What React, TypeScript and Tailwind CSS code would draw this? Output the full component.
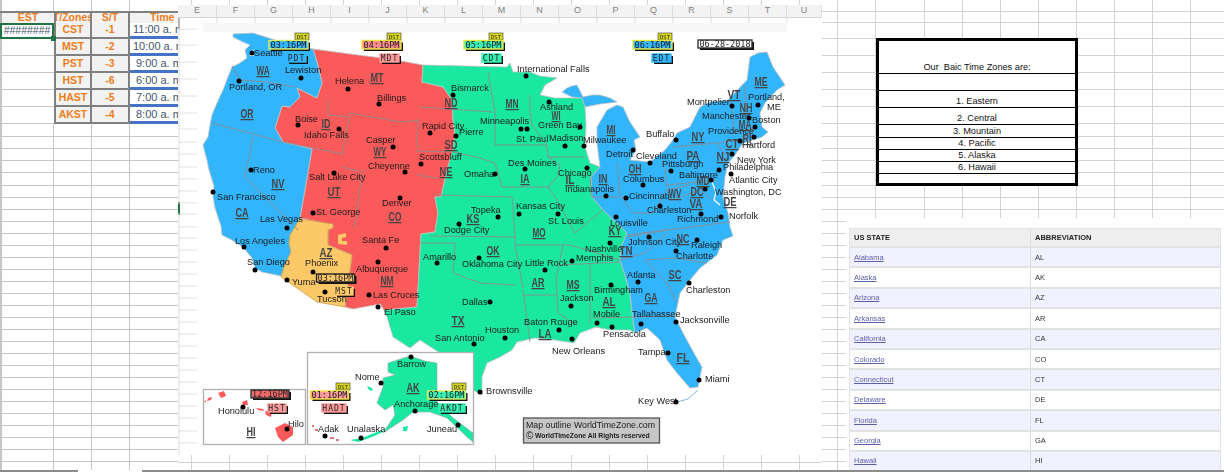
const BLUE = "#33b5fb";
const RED = "#fb5a5a";
const GREEN = "#1be8a0";
const ORANGE = "#fdc868";

const upperRows = [11, 12, 16, 17, 17, 17, 17, 17];
const zones = [
  ["CST", "-1", "11:00 a. m."],
  ["MST", "-2", "10:00 a. m."],
  ["PST", "-3", "9:00 a. m."],
  ["HST", "-6", "6:00 a. m."],
  ["HAST", "-5", "7:00 a. m."],
  ["AKST", "-4", "8:00 a. m."],
];
const plainRows = [13, 12, 12, 12, 13, 12, 12, 12, ...Array(20).fill(12), 8];
const topRightRows = [12, 11, 16, 17, 17, 17, 17, 17, 13, 12, 12, 12, 13, 12, 12, 8];
const topRightCols = [16, 38, 49, 38, 38, 38, 38, 38, 38, 38, 33];
const columnLetters = "EFGHIJKLMNOPQRSTU".split("");
const tickCols = [14, ...Array(16).fill(38), 22];

const zoneList = [
  { text: "Our  Baic Time Zones are:", h: "h-[33px]" },
  { text: "", h: "h-[17px]" },
  { text: "1. Eastern", h: "h-[17px]" },
  { text: "2. Central", h: "h-[17px]" },
  { text: "3. Mountain", h: "h-[13px]" },
  { text: "4. Pacific", h: "h-[12px]" },
  { text: "5. Alaska", h: "h-[12px]" },
  { text: "6. Hawaii", h: "h-[12px]" },
];

const states = [
  ["Alabama", "AL"], ["Alaska", "AK"], ["Arizona", "AZ"], ["Arkansas", "AR"],
  ["California", "CA"], ["Colorado", "CO"], ["Connecticut", "CT"], ["Delaware", "DE"],
  ["Florida", "FL"], ["Georgia", "GA"], ["Hawaii", "HI"],
];

const stateLines = [
  "232,66 240,80 267,82 295,87", "212,123 283,142", "253,137 245,177 298,230",
  "328,100 328,115 348,117", "350,113 342,155", "283,142 343,154", "342,167 362,172",
  "362,173 355,228", "350,113 400,122 420,120", "420,107 493,112", "418,120 417,151",
  "417,151 453,152 480,158 495,163", "417,175 437,178", "435,195 512,197", "430,236 515,237",
  "420,243 455,243", "488,72 495,112 495,145", "495,145 547,145", "530,95 530,113 532,125 547,145",
  "502,187 548,187", "548,187 557,200 575,233", "512,197 515,237 515,245", "548,157 585,157",
  "495,163 502,187", "547,145 548,157 560,165 558,176 548,187", "590,177 592,197",
  "515,245 570,245 620,260", "523,295 557,295", "455,243 453,273 480,283 515,285",
  "515,245 523,288", "523,290 530,342", "557,295 558,313 577,325", "590,263 590,323",
  "560,265 620,262", "563,245 556,280 557,295", "593,318 633,317 677,316",
  "645,260 667,283 677,303", "645,260 677,258 707,263", "627,237 667,230",
  "620,260 645,253 667,233", "627,235 730,222", "617,163 620,195", "592,197 620,197",
  "620,195 633,213 653,213 667,190 690,185", "663,160 667,185 717,180",
  "673,147 717,143 725,155", "717,143 740,140 755,130", "730,100 735,135", "745,85 745,118",
  "735,132 755,128", "667,185 672,200 700,190 712,200", "575,233 590,220 603,210",
];

const cities: [string, number, number, number, number][] = [
  ["Seattle", 254, 56, 252, 53], ["Lewiston", 285, 73, 301, 78], ["Helena", 335, 84, 348, 89],
  ["Billings", 377, 101, 379, 104], ["Portland, OR", 229, 90, 239, 81], ["Boise", 295, 122, 298, 125],
  ["Idaho Falls", 304, 138, 339, 129], ["Casper", 366, 143, 393, 147], ["Cheyenne", 368, 169, 405, 172],
  ["Reno", 253, 173, 251, 170], ["San Francisco", 217, 200, 213, 192], ["Salt Lake City", 309, 180, 334, 173],
  ["St. George", 316, 215, 313, 213], ["Las Vegas", 260, 222, 287, 228], ["Denver", 382, 206, 400, 198],
  ["Los Angeles", 235, 244, 244, 247], ["San Diego", 247, 265, 255, 270], ["Phoenix", 305, 266, 313, 272],
  ["Yuma", 292, 285, 287, 280], ["Tucson", 317, 302, 325, 292], ["Santa Fe", 362, 243, 386, 248],
  ["Albuquerque", 356, 272, 378, 262], ["Las Cruces", 373, 298, 369, 295], ["El Paso", 384, 315, 378, 307],
  ["Amarillo", 423, 260, 437, 263], ["Oklahoma City", 462, 267, 479, 258], ["Dallas", 462, 305, 490, 302],
  ["San Antonio", 435, 341, 474, 344], ["Houston", 485, 333, 505, 338], ["Brownsville", 486, 394, 480, 392],
  ["Little Rock", 525, 266, 545, 270], ["Memphis", 576, 261, 572, 261], ["Nashville", 585, 252, 610, 243],
  ["Johnson City", 628, 245, 649, 237], ["Raleigh", 691, 248, 697, 240], ["Charlotte", 676, 259, 676, 251],
  ["Atlanta", 627, 278, 638, 282], ["Charleston", 686, 293, 689, 283], ["Birmingham", 594, 293, 611, 285],
  ["Jackson", 560, 301, 571, 306], ["Baton Rouge", 524, 325, 559, 330], ["Mobile", 593, 317, 597, 323],
  ["Pensacola", 603, 337, 612, 327], ["Tallahassee", 632, 317, 641, 324], ["Jacksonville", 680, 323, 676, 322],
  ["New Orleans", 552, 354, 572, 339], ["Tampa", 638, 355, 668, 353], ["Miami", 705, 382, 699, 380],
  ["Key West", 638, 404, 676, 402], ["International Falls", 517, 72, 526, 76], ["Bismarck", 451, 91, 453, 95],
  ["Ashland", 540, 110, 549, 102], ["Minneapolis", 480, 124, 521, 129], ["St. Paul", 516, 142, 527, 129],
  ["Green Bay", 538, 128, 580, 127], ["Madison", 549, 141, 565, 146], ["Milwaukee", 583, 143, 584, 146],
  ["Rapid City", 422, 129, 430, 133], ["Pierre", 459, 135, 456, 136], ["Scottsbluff", 419, 160, 421, 164],
  ["Omaha", 464, 177, 495, 174], ["Des Moines", 508, 166, 525, 169], ["Chicago", 558, 176, 587, 168],
  ["Indianapolis", 565, 192, 606, 196], ["Detroit", 606, 157, 633, 150], ["Cleveland", 636, 159, 650, 163],
  ["Buffalo", 646, 137, 676, 140], ["Pittsburgh", 662, 167, 671, 171], ["Columbus", 623, 182, 643, 185],
  ["Cincinnati", 629, 199, 626, 198], ["Charleston", 647, 213, 660, 206], ["Richmond", 677, 222, 701, 214],
  ["Norfolk", 729, 219, 721, 217], ["Louisville", 610, 226, 616, 217], ["Montpelier", 687, 105, 732, 106],
  ["Portland,", 748, 100, 758, 105], ["Manchester", 702, 119, 749, 118], ["Boston", 752, 123, 755, 127],
  ["Providence", 708, 134, 740, 141], ["Hartford", 742, 148, 754, 137], ["New York", 737, 163, 732, 154],
  ["Philadelphia", 723, 170, 719, 170], ["Baltimore", 679, 178, 711, 180], ["Atlantic City", 729, 183, 731, 174],
  ["Washington, DC", 715, 195, 705, 189], ["Topeka", 471, 213, 498, 217], ["Kansas City", 516, 209, 519, 214],
  ["St. Louis", 548, 224, 558, 214], ["Dodge City", 444, 233, 459, 224], ["Barrow", 397, 367, 411, 357],
  ["Nome", 355, 380, 381, 383], ["Anchorage", 394, 407, 415, 411], ["Adak", 318, 432, 325, 436],
  ["Unalaska", 347, 432, 361, 438], ["Juneau", 427, 432, 458, 425], ["Honolulu", 218, 414, 243, 407],
  ["Hilo", 288, 427, 287, 429],
];

const stateLabels: [string, number, number][] = [
  ["WA", 263, 75], ["OR", 247, 118], ["ID", 326, 128], ["MT", 377, 82], ["WY", 380, 156], ["NV", 278, 188],
  ["UT", 334, 196], ["CA", 242, 217], ["CO", 395, 221], ["AZ", 326, 257], ["NM", 387, 285], ["OK", 493, 255],
  ["TX", 458, 325], ["KS", 473, 223], ["NE", 446, 176], ["SD", 451, 149], ["ND", 451, 107], ["MN", 512, 108],
  ["WI", 556, 120], ["IA", 525, 183], ["IL", 570, 184], ["IN", 603, 183], ["MI", 611, 134], ["OH", 635, 173],
  ["KY", 615, 235], ["MO", 539, 237], ["WV", 675, 198], ["VA", 696, 208], ["PA", 693, 160], ["NY", 698, 141],
  ["VT", 734, 99], ["ME", 761, 86], ["NH", 746, 112], ["MA", 745, 129], ["RI", 747, 143], ["CT", 732, 148],
  ["NJ", 723, 161], ["DE", 730, 206], ["MD", 703, 185], ["DC", 697, 196], ["NC", 683, 243], ["TN", 626, 255],
  ["SC", 675, 279], ["AR", 538, 287], ["MS", 573, 289], ["AL", 609, 306], ["GA", 651, 302], ["LA", 545, 338],
  ["FL", 683, 362], ["AK", 413, 392], ["HI", 251, 436],
];

function Chip({ x, y, w, h, text, fill, stroke = "#333", size = 8.5, spacing = 0, sw = 1.4 }: {
  x: number; y: number; w: number; h: number; text: string; fill: string; stroke?: string; size?: number; spacing?: number; sw?: number;
}) {
  return (
    <g>
      <rect x={x + 2} y={y + 2} width={w} height={h} fill="#111" />
      <rect x={x} y={y} width={w} height={h} fill={fill} stroke={stroke} strokeWidth={sw} />
      <text x={x + w / 2} y={y + h / 2 + size * 0.36} textAnchor="middle" fontSize={size} letterSpacing={spacing}
        className="font-['DejaVu_Sans_Mono',monospace]" fill="#222">{text}</text>
    </g>
  );
}

function Dst({ x, y }: { x: number; y: number }) {
  return (
    <g>
      <rect x={x} y={y} width={14} height={7} fill="#d8d820" stroke="#333" strokeWidth={0.6} />
      <text x={x + 7} y={y + 5.5} textAnchor="middle" fontSize={5.5} fill="#222" className="font-['DejaVu_Sans_Mono',monospace]">DST</text>
    </g>
  );
}

function UsMap() {
  return (
    <svg viewBox="178 18 644 437" className="block h-[437px] w-[644px] shrink-0 blur-[0.3px]">
      <rect x={178} y={18} width={2} height={437} fill="#eeeeee" />
      <rect x={178} y={18} width={2} height={12} fill="#b5b5b5" />
      <rect x={178} y={202} width={2} height={13} fill="#217346" />
      {[29, 45, 62, 79, 96, 113, 129, 142, 154, 167, 179, 191, 203, 214, 227, 238, 250, 262, 274, 286, 298, 310, 322, 334, 346, 358, 370, 382, 394, 406, 418, 431, 443].map((y) => (
        <line key={y} x1={178} x2={197} y1={y} y2={y} stroke="#e2e2e2" strokeWidth={1} />
      ))}
      {columnLetters.slice(0, 16).map((l, i) => (
        <line key={l} x1={217 + i * 38} x2={217 + i * 38} y1={18} y2={23} stroke="#dddddd" />
      ))}
      <rect x={203} y={23} width={584} height={9} fill="#f6f6f6" />

      <g stroke="#c0c0c0" strokeWidth={0.8}>
        <polygon fill={RED} points="313,49 350,54 390,59 423,65 422,82 443,87 452,100 453,120 455,135 452,153 447,170 441,197 435,197 438,213 435,232 421,234 417,307 384,310 380,304 353,309 345,307 352,255 328,245 328,224 300,218 312,149 283,142 275,128 282,106 290,107 300,97 297,88 317,98 322,83 317,62" />
        <polygon fill={BLUE} points="233,34 253,33 275,40 295,45 313,49 317,62 322,83 317,98 297,88 300,97 290,107 282,106 275,128 283,142 312,149 300,218 298,222 290,235 289,243 291,252 285,265 281,276 262,272 255,268 252,258 243,247 232,240 222,235 221,226 215,208 213,196 214,186 209,170 207,160 203,145 208,137 210,125 212,115 217,103 223,90 228,77 232,67 240,63 247,58 245,50 250,45 243,42 233,37" />
        <polygon fill={ORANGE} stroke="#c8a050" points="300,219 333,224 333,228 328,230 328,245 352,255 345,307 317,302 281,277 285,265 291,252 289,243 290,235" />
        <polygon fill={ORANGE} stroke="none" points="338,235 346,233 346,237 342,238 342,241 347,241 347,245 338,244" />
        <polygon fill={GREEN} points="423,65 507,67 510,63 513,72 530,72 540,76 557,78 545,85 540,95 555,98 582,98 585,107 586,125 585,147 590,163 600,167 591,177 592,197 603,210 627,233 622,245 620,260 625,275 630,293 633,320 635,333 630,330 610,330 596,327 580,333 574,343 555,340 535,338 517,342 512,350 500,357 487,363 482,377 482,395 473,390 465,380 452,365 440,353 420,340 410,348 393,337 387,317 384,310 417,307 421,234 435,232 438,213 435,197 441,197 447,170 452,153 455,135 453,120 452,100 443,87 422,82" />
        <polygon fill={BLUE} points="600,167 597,143 597,127 607,110 617,105 623,107 628,118 630,122 640,137 634,140 636,150 630,160 650,162 665,150 673,140 677,133 690,127 700,107 710,102 728,100 747,80 750,57 758,53 767,52 773,67 785,85 777,90 765,103 760,113 762,127 768,132 762,137 753,140 743,143 735,155 728,163 725,177 723,197 728,213 730,227 733,236 723,240 717,255 700,268 690,280 680,293 675,317 683,333 695,355 702,367 698,387 690,388 677,373 667,360 660,340 647,328 635,333 633,320 630,293 625,275 620,260 622,245 627,233 603,210 592,197 591,177" />
        <polygon fill={BLUE} points="567,88 572,86 577,85 583,97 592,95 600,95 610,98 617,102 600,104 590,106 585,107 582,98 572,97 562,92" />
      </g>
      <polygon fill="#ffffff" points="250,51 254,50 254,56 250,56" />
      <polyline fill="none" stroke="#ffffff" strokeWidth={1.2} points="712,182 716,192 714,200 720,205" />
      <polyline fill="none" stroke="#7fb6d6" strokeWidth={1} points="698,390 688,399 677,402" />
      <g fill="none" stroke="#8c8c8c" strokeWidth={0.9}>
        {stateLines.map((p) => <polyline key={p} points={p} />)}
      </g>

      <rect x={203.5} y={389.5} width={102} height={55} fill="#ffffff" stroke="#b0b0b0" strokeWidth={1.3} />
      <rect x={307.5} y={352.5} width={166} height={92} fill="#ffffff" stroke="#b0b0b0" strokeWidth={1.3} />
      <g fill={GREEN}>
        <polygon stroke="#a4a4a4" strokeWidth={0.6} points="410,356 388,363 388,372 395,375 383,378 383,387 377,403 385,410 393,405 395,415 383,433 403,420 413,412 430,412 447,418 467,437 473,442 473,433 452,417 437,402 437,363 425,361" />
        <polygon points="367,386 372,388 373,391 369,390" />
        <polygon points="403,427 408,426 407,431 403,431" />
        <polygon points="350,440 362,438 372,434 382,430 383,432 372,437 358,442" />
      </g>
      <g fill="#e07a7a">
        <rect x={312} y={425} width={2} height={2} /><rect x={315} y={429} width={3} height={2} /><rect x={330} y={437} width={4} height={2} /><rect x={336} y={439} width={3} height={2} />
      </g>
      <g fill={RED}>
        <polygon points="218,393 224,391 226,396 221,398" />
        <polygon points="208,398 212,397 211,400 207,401" /><polygon points="206,400 204,402 206,402" />
        <polygon points="242,402 247,400 248,405 243,405" />
        <polygon points="256,408 263,409 264,411 258,410" />
        <polygon points="265,411 272,412 271,417 266,415" />
        <polygon points="275,428 285,423 293,427 293,435 283,442 278,437" />
      </g>

      <g className="font-['Liberation_Sans',sans-serif]" fontSize={9.2} fill="#1a1a1a">
        {cities.map(([name, tx, ty, dx, dy]) => (
          <g key={name + tx}>
            <circle cx={dx} cy={dy} r={2.5} fill="#000" />
            <text x={tx} y={ty}>{name}</text>
          </g>
        ))}
        <text x={767} y={110}>ME</text>
      </g>
      <g className="font-['Liberation_Sans',sans-serif] font-bold" fontSize={12.5} fill="#444" textAnchor="middle" textDecoration="underline">
        {stateLabels.map(([s, x, y]) => (
          <text key={s} x={x} y={y} textLength={s.includes("I") ? 9 : 13} lengthAdjust="spacingAndGlyphs">{s}</text>
        ))}
      </g>

      <Dst x={295} y={33} /><Chip x={269} y={40.5} w={39} h={8.5} text="03:16PM" fill={BLUE} stroke="#d8f060" />
      <Chip x={287} y={54} w={19} h={8} text="PDT" fill={BLUE} size={8} spacing={1} stroke={BLUE} />
      <Dst x={387} y={33} /><Chip x={362} y={40.5} w={39} h={8.5} text="04:16PM" fill="#ff8c8c" stroke="#f0e040" />
      <Chip x={380} y={54} w={19} h={8} text="MDT" fill="#ff9a9a" size={8} spacing={1} stroke="#ff9a9a" />
      <Dst x={489} y={33} /><Chip x={464} y={40.5} w={39} h={8.5} text="05:16PM" fill="#38f0b4" stroke="#e8e840" />
      <Chip x={482} y={54} w={19} h={8} text="CDT" fill="#38f0b4" size={8} spacing={1} stroke="#38f0b4" />
      <Dst x={658} y={33} /><Chip x={633} y={40.5} w={39} h={8.5} text="06:16PM" fill={BLUE} stroke="#e8e840" />
      <Chip x={652} y={54} w={19} h={8} text="EDT" fill={BLUE} size={8} spacing={1} stroke={BLUE} />
      <Chip x={698} y={40} w={54} h={8} text="06-28-2018" fill="#ffffff" stroke="#333" />
      <Chip x={316.5} y={274} w={38} h={8} text="03:16PM" fill={ORANGE} stroke="#222" />
      <Chip x={335} y={287} w={18} h={8} text="MST" fill={ORANGE} size={8} spacing={1} stroke={ORANGE} />
      <Dst x={336} y={383} /><Chip x={310.5} y={391} w={38} h={8} text="01:16PM" fill="#ff9a9a" stroke="#f0e040" />
      <Chip x={322} y={404} w={24} h={8} text="HADT" fill="#ff9a9a" size={8} spacing={1} stroke="#ff9a9a" />
      <Dst x={452} y={383} /><Chip x={427.5} y={391} w={38} h={8} text="02:16PM" fill="#38f0b4" stroke="#d8f060" />
      <Chip x={439} y={404} w={26} h={8} text="AKDT" fill="#38f0b4" size={8} spacing={1} stroke="#38f0b4" />
      <Chip x={251} y={390} w={38} h={8} text="12:16PM" fill="#f06a6a" stroke="#333" />
      <Chip x={268} y={404} w={18} h={8} text="HST" fill="#ff9a9a" size={8} spacing={1} stroke="#ff9a9a" />

      <rect x={523.5} y={418} width={136} height={25} fill="#c6c6c6" stroke="#555" strokeWidth={1.3} />
      <g className="font-['Liberation_Sans',sans-serif] whitespace-pre" fill="#1a1a1a">
        <text x={526} y={428} fontSize={8.8}>Map outline  WorldTimeZone.com</text>
        <text x={526} y={439} fontSize={10}>©</text>
        <text x={535} y={438} fontSize={6.8} fontWeight={700}>WorldTimeZone   All Rights reserved</text>
      </g>
    </svg>
  );
}

function TickRow({ h, line }: { h: string; line: boolean }) {
  return (
    <div className={`flex shrink-0 ${h} ${line ? "border-b border-[#d0d0d0]" : ""}`}>
      {tickCols.map((w, i) => (
        <div key={i} style={{ width: w }} className={i < tickCols.length - 1 ? "border-r border-[#d4d4d4]" : ""} />
      ))}
    </div>
  );
}

function LeftSheet() {
  const cellBase = "flex items-center justify-center overflow-hidden whitespace-nowrap";
  const head = "text-[10.5px] font-bold text-[#ed7d1a]";
  return (
    <div className="flex w-[178px] shrink-0 flex-col font-['Liberation_Sans',sans-serif]">
      <div className="flex h-[11px] shrink-0">
        <div className="w-[54px] border-r border-l-2 border-[#c6c6c6]" />
        <div className="w-[38px] border-r border-[#c6c6c6]" />
        <div className="w-[38px] border-r border-[#c6c6c6]" />
        <div className="w-[48px]" />
      </div>
      <div className={`flex h-[12px] shrink-0 border-t-2 border-[#808080] ${head}`}>
        <div className={`${cellBase} w-[54px] border-l-2 border-[#b0b0b0] bg-[#f2f2f2]`}>EST</div>
        <div className={`${cellBase} w-[38px] border-x-2 border-[#808080] bg-[#f2f2f2]`}>T/Zones</div>
        <div className={`${cellBase} w-[38px] border-r-2 border-[#808080] bg-[#f2f2f2]`}>S/T</div>
        <div className={`${cellBase} w-[48px] justify-start bg-[#f2f2f2] pl-[20px]`}>Time</div>
      </div>
      {zones.map(([tz, st, time], i) => (
        <div key={tz} style={{ height: upperRows[i + 2] }} className="flex shrink-0">
          {i === 0 ? (
            <div className="relative w-[54px] border-[2px] border-[#217346] text-[10.5px] text-[#44546a]">
              <div className={`${cellBase} h-full`}>########</div>
              <div className="absolute right-[-4px] bottom-[-4px] h-[5px] w-[5px] bg-[#217346]" />
            </div>
          ) : (
            <div className="w-[54px] border-b border-l-2 border-[#c6c6c6]" />
          )}
          <div className={`${cellBase} ${head} w-[38px] border-x-2 border-b-2 border-[#808080] bg-[#f2f2f2]`}>{tz}</div>
          <div className={`${cellBase} ${head} w-[38px] border-r-2 border-b-2 border-[#808080] bg-[#f2f2f2]`}>{st}</div>
          <div className={`flex w-[48px] items-center overflow-hidden border-b-[3px] border-[#4472c4] whitespace-nowrap text-[11px] text-[#44546a] ${time.length > 10 ? "pl-[3px]" : "pl-[6px]"}`}>{time}</div>
        </div>
      ))}
      {plainRows.map((h, i) => (
        <div key={i} style={{ height: h }} className={`flex shrink-0 ${i < plainRows.length - 1 ? "border-b border-[#c6c6c6]" : ""}`}>
          <div className="w-[54px] border-r border-l-2 border-[#c6c6c6]" />
          <div className="w-[38px] border-r border-[#c6c6c6]" />
          <div className="w-[38px] border-r border-[#c6c6c6]" />
          <div className="w-[48px]" />
        </div>
      ))}
    </div>
  );
}

function MapPanel() {
  return (
    <div className="flex w-[644px] shrink-0 flex-col bg-white font-['Liberation_Sans',sans-serif]">
      <TickRow h="h-[5px]" line={false} />
      <div className="flex h-[13px] shrink-0 border-b border-[#d4d4d4] bg-[#f3f3f3] text-[9px] text-[#7f7f7f]">
        {columnLetters.map((l, i) => (
          <div key={l} className={`flex items-center justify-center border-r border-[#dcdcdc] ${i === 0 ? "w-[39px]" : i === 16 ? "w-[35px]" : "w-[38px]"}`}>{l}</div>
        ))}
      </div>
      <UsMap />
      <TickRow h="h-[8px]" line />
      <TickRow h="h-[7px]" line={false} />
    </div>
  );
}

function ZoneBox() {
  return (
    <div className="absolute top-[38px] left-[54px] flex h-[148px] w-[202px] flex-col border-[3px] border-black bg-white font-['Liberation_Sans',sans-serif] text-[9.2px] leading-[12px] text-[#111]">
      {zoneList.map((z, i) => (
        <div key={i} className={`${z.h} flex shrink-0 items-end justify-center border-b border-black whitespace-pre`}>{z.text}</div>
      ))}
    </div>
  );
}

function StateTable() {
  return (
    <div className="h-[252px] flex-1 overflow-hidden bg-white pt-[10px] pr-[3px] pl-[3px] font-['Liberation_Sans',sans-serif] text-[7.5px] blur-[0.25px]">
      <div className="flex h-[20px] shrink-0 border border-b-2 border-[#e2e2e2] bg-[#eeeeee] font-bold text-[#222]">
        <div className="flex w-[181px] items-center border-r border-[#dcdcdc] pl-[4px]">US STATE</div>
        <div className="flex flex-1 items-center pl-[4px]">ABBREVIATION</div>
      </div>
      {states.map(([name, abbr], i) => (
        <div key={name} className={`flex h-[20.4px] border-x border-b-2 border-[#e2e2e2] ${i % 2 === 0 ? "bg-[#f1f2ff]" : "bg-white"}`}>
          <div className="flex w-[181px] items-center border-r border-[#dcdcdc] pl-[4px] text-[#5a5fa8] underline">{name}</div>
          <div className="flex flex-1 items-center pl-[4px] text-[#333]">{abbr}</div>
        </div>
      ))}
    </div>
  );
}

function RightPanel() {
  const gutter = [4, ...Array(20).fill(12), 8];
  return (
    <div className="relative flex w-[402px] shrink-0 flex-col">
      {topRightRows.map((h, i) => (
        <div key={i} style={{ height: h }} className={`flex shrink-0 ${i < topRightRows.length - 1 ? "border-b border-[#d2d2d2]" : ""}`}>
          {topRightCols.map((w, c) => (
            <div key={c} style={{ width: w }} className={c < topRightCols.length - 1 ? "border-r border-[#d2d2d2]" : ""} />
          ))}
        </div>
      ))}
      <ZoneBox />
      <div className="flex h-[252px] shrink-0">
        <div className="flex w-[24px] shrink-0 flex-col">
          {gutter.map((h, i) => (
            <div key={i} style={{ height: h }} className={`flex shrink-0 ${i < gutter.length - 1 ? "border-b border-[#d2d2d2]" : ""}`}>
              <div className="w-[16px] border-r border-[#d2d2d2]" />
            </div>
          ))}
        </div>
        <StateTable />
      </div>
    </div>
  );
}

export default function App() {
  return (
    <div className="flex h-[472px] w-[1224px] flex-col overflow-hidden bg-white">
      <div className="flex h-[470px] shrink-0">
        <LeftSheet />
        <MapPanel />
        <RightPanel />
      </div>
      <div className="flex h-[2px] shrink-0">
        <div className="w-[78px] bg-[#8c8c8c]" />
        <div className="w-[64px]" />
        <div className="flex-1 bg-[#8c8c8c]" />
      </div>
    </div>
  );
}
